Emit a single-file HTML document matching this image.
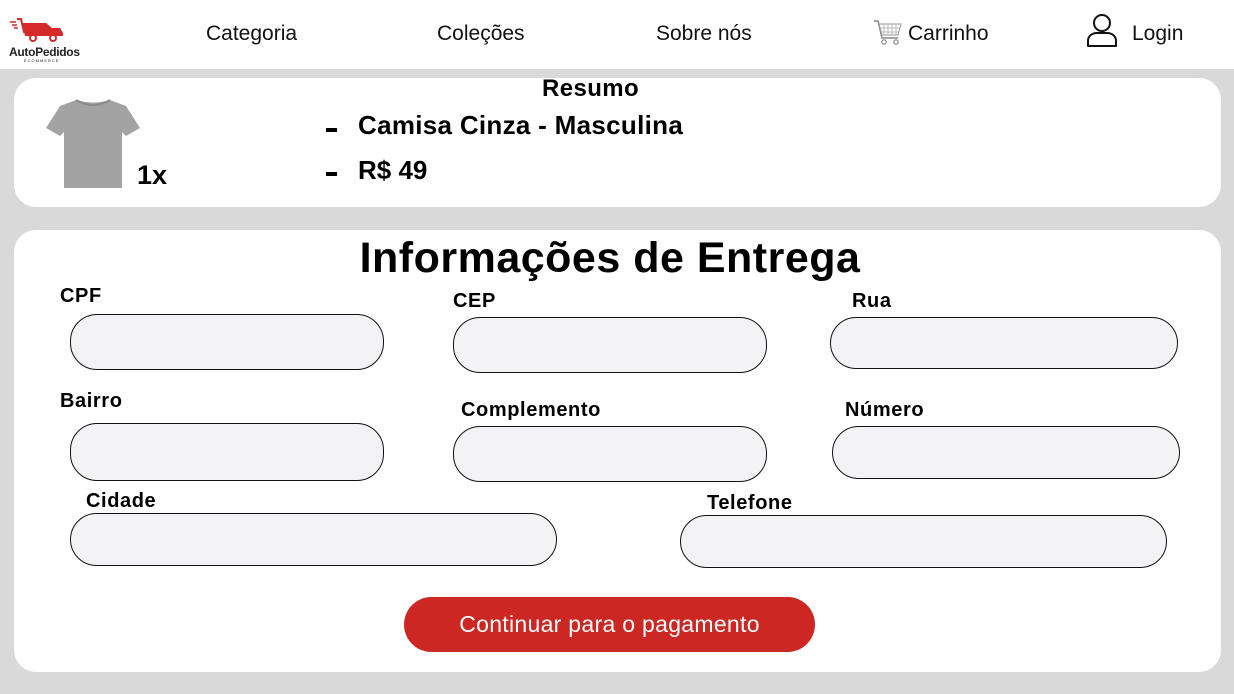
<!DOCTYPE html>
<html><head><meta charset="utf-8"><style>
*{margin:0;padding:0;box-sizing:border-box}
body{width:1234px;height:694px;background:#d9d9d9;font-family:"Liberation Sans","DejaVu Sans",sans-serif;position:relative;overflow:hidden;color:#000}
.hdr{position:absolute;left:0;top:0;width:1234px;height:69px;background:#fff}
.nav{position:absolute;top:22px;font-size:21px;color:#111}
.card{position:absolute;left:14px;width:1207px;background:#fff;border-radius:22px}
.lbl{position:absolute;font-weight:bold;font-size:20px;letter-spacing:0.6px}
.in{position:absolute;background:#f3f2f5;border:1px solid #111;border-radius:27px}
.dash{position:absolute;width:11px;height:4px;background:#000}
</style></head><body>
<div class="hdr">
 <svg style="position:absolute;left:8px;top:16px" width="74" height="30" viewBox="0 0 74 30">
  <path d="M2 6h6M4 9h5M6 12h4" stroke="#d52a2a" stroke-width="1.5"/>
  <path d="M9 3h4l3 13h24" stroke="#d52a2a" stroke-width="2" fill="none"/>
  <path d="M14 7h24l6 5h8l3 5v3H17z" fill="#d52a2a"/>
  <circle cx="25" cy="22" r="3" fill="#fff" stroke="#d52a2a" stroke-width="2"/>
  <circle cx="45" cy="22" r="3" fill="#fff" stroke="#d52a2a" stroke-width="2"/>
 </svg>
 <div style="position:absolute;left:9px;top:45px;font-size:12px;font-weight:bold;color:#222;letter-spacing:-0.3px">AutoPedidos</div>
 <div style="position:absolute;left:24px;top:58px;font-size:4px;letter-spacing:1px;color:#222">ECOMMERCE</div>
 <div class="nav" style="left:206px">Categoria</div>
 <div class="nav" style="left:437px">Coleções</div>
 <div class="nav" style="left:656px">Sobre nós</div>
 <svg style="position:absolute;left:873px;top:19px" width="30" height="28" viewBox="0 0 30 28">
  <path d="M1 2h4l4 17h16" stroke="#888" stroke-width="1.5" fill="none"/>
  <path d="M6 5h22l-3 11H9z" fill="none" stroke="#999" stroke-width="1"/>
  <path d="M11 5v11M15 5v11M19 5v11M23 5v11M7 9h20M8 13h18" stroke="#aaa" stroke-width="0.8"/>
  <circle cx="11" cy="23" r="2.2" fill="none" stroke="#888" stroke-width="1.2"/>
  <circle cx="23" cy="23" r="2.2" fill="none" stroke="#888" stroke-width="1.2"/>
 </svg>
 <div class="nav" style="left:908px">Carrinho</div>
 <svg style="position:absolute;left:1085px;top:13px" width="34" height="36" viewBox="0 0 34 36">
  <circle cx="17" cy="10" r="8" fill="none" stroke="#111" stroke-width="2"/>
  <path d="M3 33v-5c0-5 4-8 9-8h10c5 0 9 3 9 8v5z" fill="none" stroke="#111" stroke-width="2" stroke-linejoin="round"/>
 </svg>
 <div class="nav" style="left:1132px">Login</div>
</div>

<div class="card" style="top:78px;height:129px">
 <svg style="position:absolute;left:30px;top:20px" width="98" height="92" viewBox="0 0 98 92">
  <path d="M32 2 Q49 7 66 2 L82 8 L96 30 L82 38 L78 34 L78 90 L20 90 L20 34 L16 38 L2 30 L16 8 Z" fill="#a3a3a3"/>
  <path d="M32 2 Q49 12 66 2" fill="none" stroke="#8a8a8a" stroke-width="2"/>
 </svg>
 <div style="position:absolute;left:123px;top:82px;font-size:27px;font-weight:bold">1x</div>
 <div style="position:absolute;left:528px;top:-3px;font-size:24px;font-weight:bold;letter-spacing:0.4px">Resumo</div>
 <div class="dash" style="left:312px;top:50px"></div>
 <div style="position:absolute;left:344px;top:32px;font-size:26px;font-weight:bold;letter-spacing:0.3px">Camisa Cinza - Masculina</div>
 <div class="dash" style="left:312px;top:94px"></div>
 <div style="position:absolute;left:344px;top:77px;font-size:26px;font-weight:bold">R$ 49</div>
</div>

<div class="card" style="top:230px;height:442px"></div>
<div style="position:absolute;left:0;width:1234px;top:234px;text-align:center;font-size:43px;font-weight:bold;letter-spacing:0.5px"><span style="position:relative;left:-7px">Informações de Entrega</span></div>

<div class="lbl" style="left:60px;top:285px">CPF</div>
<div class="in" style="left:70px;top:314px;width:314px;height:56px"></div>
<div class="lbl" style="left:453px;top:290px">CEP</div>
<div class="in" style="left:453px;top:317px;width:314px;height:56px"></div>
<div class="lbl" style="left:852px;top:290px">Rua</div>
<div class="in" style="left:830px;top:317px;width:348px;height:52px"></div>

<div class="lbl" style="left:60px;top:390px">Bairro</div>
<div class="in" style="left:70px;top:423px;width:314px;height:58px"></div>
<div class="lbl" style="left:461px;top:399px">Complemento</div>
<div class="in" style="left:453px;top:426px;width:314px;height:56px"></div>
<div class="lbl" style="left:845px;top:399px">Número</div>
<div class="in" style="left:832px;top:426px;width:348px;height:53px"></div>

<div class="lbl" style="left:86px;top:490px">Cidade</div>
<div class="in" style="left:70px;top:513px;width:487px;height:53px"></div>
<div class="lbl" style="left:707px;top:492px">Telefone</div>
<div class="in" style="left:680px;top:515px;width:487px;height:53px"></div>

<div style="position:absolute;left:404px;top:597px;width:411px;height:55px;background:#cc2722;border-radius:28px;color:#fff;font-size:23px;text-align:center;line-height:55px;letter-spacing:0.3px">Continuar para o pagamento</div>
</body></html>
